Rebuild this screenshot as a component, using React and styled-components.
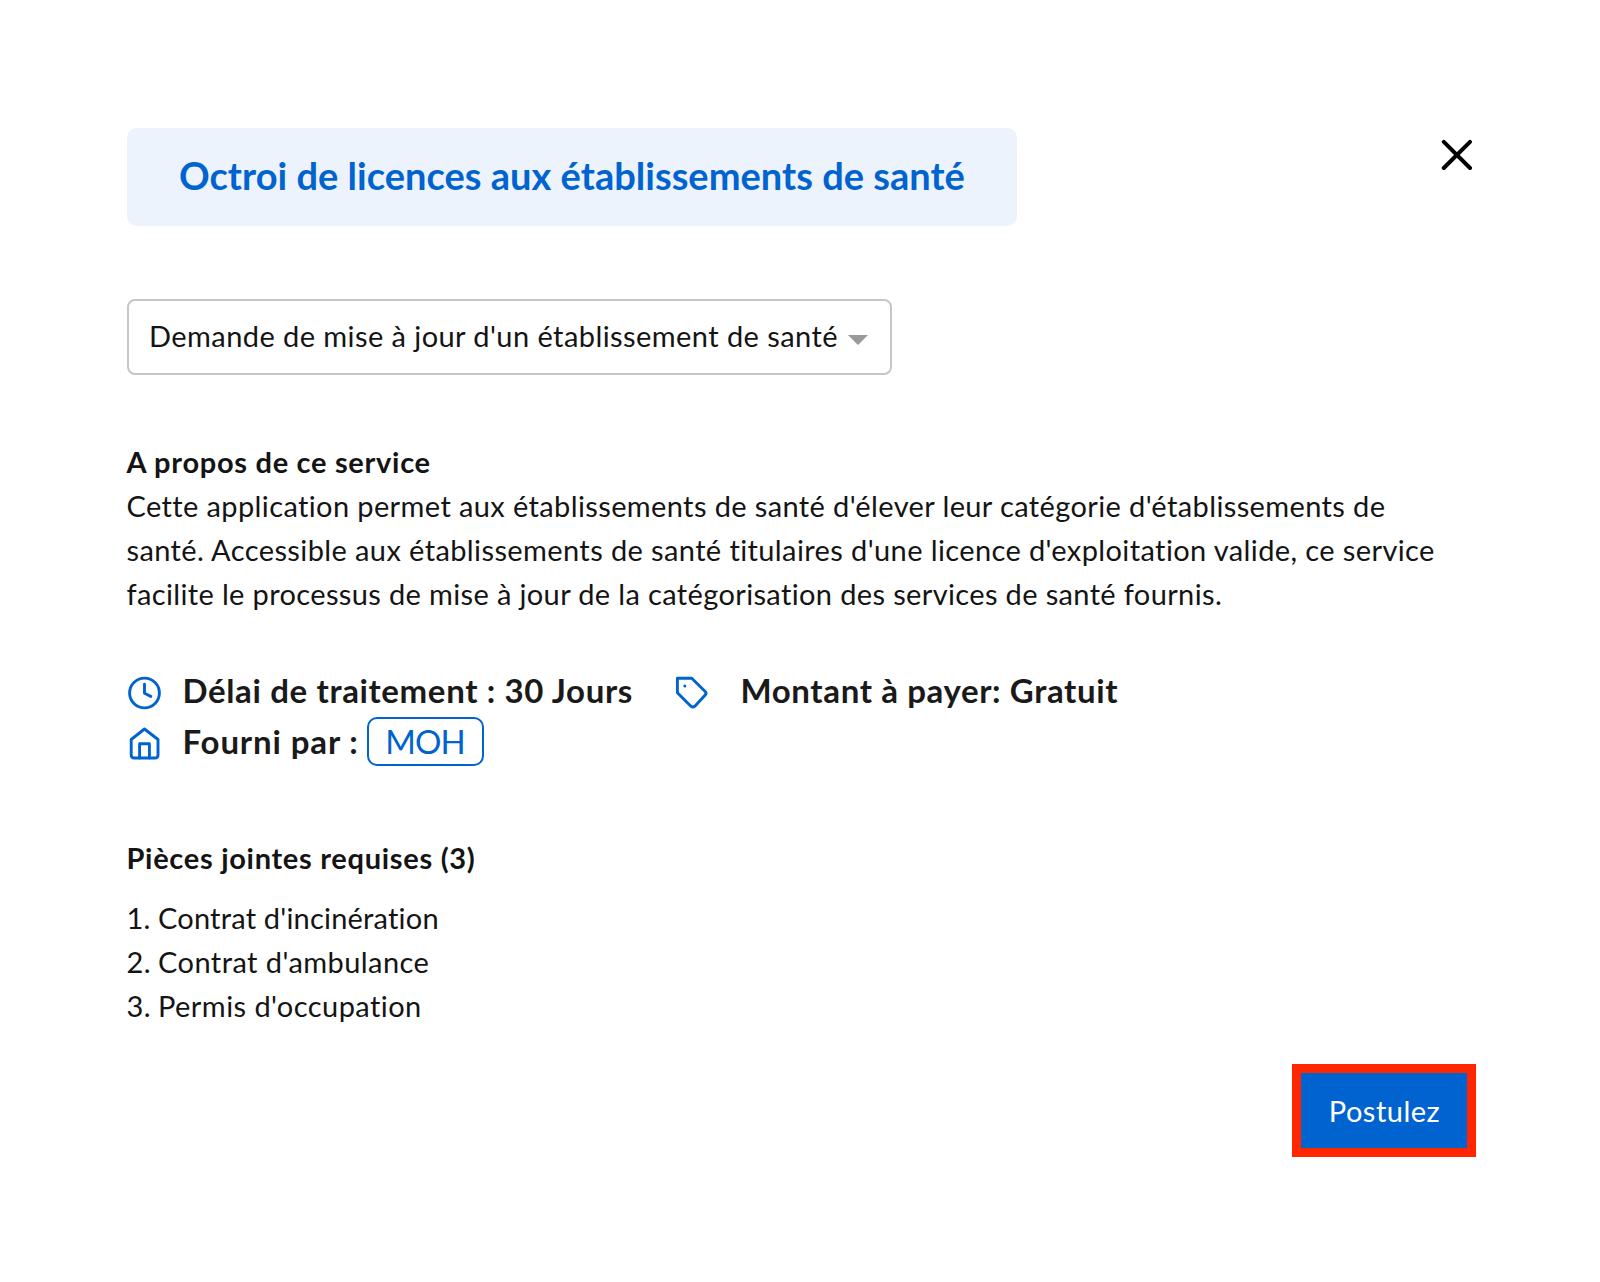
import styled, { createGlobalStyle } from 'styled-components';

const GlobalStyle = createGlobalStyle`
  * {
    box-sizing: border-box;
  }
  body {
    margin: 0;
    background: #ffffff;
    color: #141414;
    font-family: Lato, 'Open Sans', sans-serif;
    font-size: 29px;
    font-variant-ligatures: none;
  }
`;

const Wrapper = styled.div`
  width: 1600px;
  height: 1282px;
  padding: 127.5px 124px 0 126.5px;
  display: flex;
  flex-direction: column;
  align-items: stretch;
`;

const Header = styled.header`
  display: flex;
  justify-content: space-between;
  align-items: flex-start;
`;

const Title = styled.h1`
  display: flex;
  align-items: center;
  width: 890.5px;
  height: 98px;
  margin: 0;
  padding: 0 0 4px 52.5px;
  border-radius: 10px;
  background: #ecf3fd;
  color: #0063cf;
  font-size: 38px;
  font-weight: 700;
  letter-spacing: 0.02px;
  white-space: nowrap;
`;

const CloseButton = styled.button`
  display: flex;
  margin: 11.5px 3px 0 0;
  padding: 0;
  border: none;
  background: none;
  cursor: pointer;
`;

const Select = styled.div`
  display: flex;
  align-items: center;
  justify-content: space-between;
  width: 765px;
  height: 76px;
  margin-top: 73.5px;
  padding: 0 21.5px 0 20.5px;
  border: 2px solid #c6c6c6;
  border-radius: 8px;
  white-space: nowrap;
  cursor: pointer;
`;

const Selected = styled.span`
  margin-top: -4px;
  letter-spacing: 0.43px;
`;

const Caret = styled.span`
  margin-top: 5px;
  border: 10px solid transparent;
  border-top-color: #999999;
  border-bottom: none;
`;

const About = styled.section`
  margin-top: 65px;
  line-height: 44.1px;
`;

const Heading = styled.h2`
  margin: 0;
  font-size: 29px;
  font-weight: 700;
  letter-spacing: 0.7px;
`;

const Text = styled.p`
  margin: 0;
`;

const Line = styled.span`
  display: block;
  letter-spacing: ${({ $spacing }) => $spacing}px;
  white-space: nowrap;
`;

const Meta = styled.section`
  display: grid;
  grid-template-columns: 548px 1fr;
  grid-auto-rows: 50.5px;
  margin-top: 50px;
`;

const MetaItem = styled.div`
  display: flex;
  align-items: center;
  color: #1a1a1a;
  font-size: 33px;
  font-weight: 700;
  white-space: nowrap;
`;

const IconBox = styled.span`
  display: flex;
  width: ${({ $width }) => $width}px;
  margin-top: 3px;
`;

const MetaText = styled.span`
  margin-top: -3px;
  letter-spacing: ${({ $spacing }) => $spacing}px;
`;

const Provider = styled.span`
  display: flex;
  align-items: center;
  justify-content: center;
  width: 117px;
  height: 49px;
  margin-top: -1px;
  margin-left: auto;
  margin-right: 190.5px;
  padding: 0 1px 2px 0;
  border: 2px solid #0063cf;
  border-radius: 10px;
  color: #0063cf;
  font-weight: 400;
  letter-spacing: -0.9px;
`;

const Documents = styled.section`
  margin-top: 69px;
  line-height: 44.2px;
`;

const List = styled.ol`
  margin: 15.5px 0 0;
  padding: 0;
  list-style: none;
`;

const ListItem = styled.li`
  display: grid;
  grid-template-columns: 31.5px 1fr;
  letter-spacing: ${({ $spacing }) => $spacing}px;
`;

const Footer = styled.footer`
  display: flex;
  justify-content: flex-end;
  margin-top: 35px;
`;

const ApplyButton = styled.button`
  width: 184px;
  height: 93px;
  padding: 0 0 0 1px;
  border: 9.5px solid #ff2600;
  background: #0063cf;
  color: #ffffff;
  font-family: inherit;
  font-size: 29px;
  letter-spacing: 0.5px;
  cursor: pointer;
`;

const CloseIcon = () => (
  <svg width="32" height="32" viewBox="0 0 32 32" fill="none" stroke="#000" strokeWidth="4" strokeLinecap="round">
    <path d="M2.8 2.8 29 29M29 2.8 2.8 29" />
  </svg>
);

const MetaIcon = ({ children }) => (
  <svg
    width="36"
    height="36"
    viewBox="0 0 36 36"
    fill="none"
    stroke="#0063cf"
    strokeWidth="2.9"
    strokeLinecap="round"
    strokeLinejoin="round"
  >
    {children}
  </svg>
);

const requiredDocs = [
  { name: "Contrat d'incinération", spacing: 0.2 },
  { name: "Contrat d'ambulance", spacing: 0.44 },
  { name: "Permis d'occupation", spacing: 0.44 },
];

export default function App() {
  return (
    <Wrapper>
      <GlobalStyle />
      <Header>
        <Title>Octroi de licences aux établissements de santé</Title>
        <CloseButton aria-label="Fermer">
          <CloseIcon />
        </CloseButton>
      </Header>

      <Select>
        <Selected>Demande de mise à jour d'un établissement de santé</Selected>
        <Caret />
      </Select>

      <About>
        <Heading>A propos de ce service</Heading>
        <Text>
          <Line $spacing={0.38}>
            Cette application permet aux établissements de santé d'élever leur catégorie d'établissements de
          </Line>
          <Line $spacing={0.39}>
            santé. Accessible aux établissements de santé titulaires d'une licence d'exploitation valide, ce service
          </Line>
          <Line $spacing={0.36}>
            facilite le processus de mise à jour de la catégorisation des services de santé fournis.
          </Line>
        </Text>
      </About>

      <Meta>
        <MetaItem>
          <IconBox $width={56}>
            <MetaIcon>
              <circle cx="17.5" cy="18" r="14.9" />
              <path d="M17.5 9.3v8.9l6.3 3.2" />
            </MetaIcon>
          </IconBox>
          <MetaText $spacing={0.64}>Délai de traitement : 30 Jours</MetaText>
        </MetaItem>
        <MetaItem>
          <IconBox $width={66}>
            <MetaIcon>
              <path d="M2.4 3.3h14.3L30.2 16.5q1.7 1.8 0 3.5L19.9 31.2q-2 1.8-4 0L2.4 17.7z" />
              <circle cx="9.8" cy="11" r="1.5" fill="#0063cf" stroke="none" />
            </MetaIcon>
          </IconBox>
          <MetaText $spacing={0.62}>Montant à payer: Gratuit</MetaText>
        </MetaItem>
        <MetaItem>
          <IconBox $width={56}>
            <MetaIcon>
              <path d="M17.5 3 4.2 13.5V29q0 3 3 3h20.8q3 0 3-3V13.5z" />
              <path d="M12.6 32V17.8h9.8V32" />
            </MetaIcon>
          </IconBox>
          <MetaText $spacing={0.87}>Fourni par :</MetaText>
          <Provider>MOH</Provider>
        </MetaItem>
      </Meta>

      <Documents>
        <Heading>Pièces jointes requises (3)</Heading>
        <List>
          {requiredDocs.map(({ name, spacing }, index) => (
            <ListItem key={name} $spacing={spacing}>
              <span>{index + 1}.</span>
              <span>{name}</span>
            </ListItem>
          ))}
        </List>
      </Documents>

      <Footer>
        <ApplyButton>Postulez</ApplyButton>
      </Footer>
    </Wrapper>
  );
}
